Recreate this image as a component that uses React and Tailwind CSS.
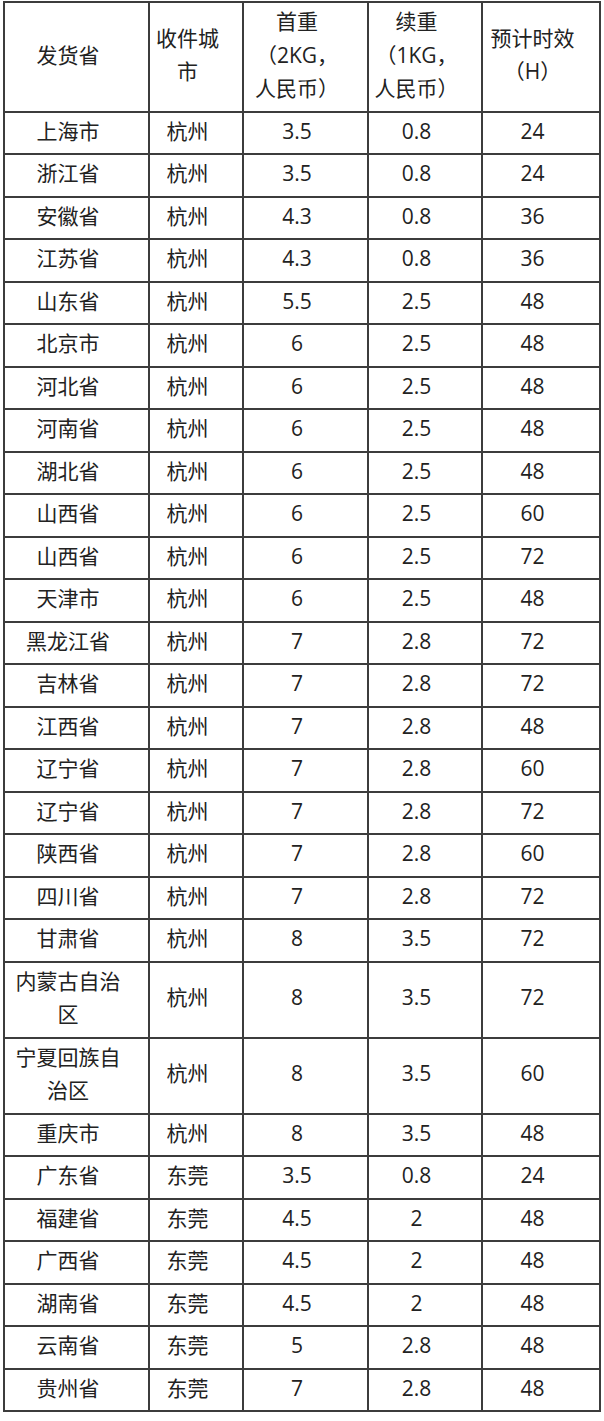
import React from 'react';

const rows = [
  ['上海市', '杭州', '3.5', '0.8', '24'],
  ['浙江省', '杭州', '3.5', '0.8', '24'],
  ['安徽省', '杭州', '4.3', '0.8', '36'],
  ['江苏省', '杭州', '4.3', '0.8', '36'],
  ['山东省', '杭州', '5.5', '2.5', '48'],
  ['北京市', '杭州', '6', '2.5', '48'],
  ['河北省', '杭州', '6', '2.5', '48'],
  ['河南省', '杭州', '6', '2.5', '48'],
  ['湖北省', '杭州', '6', '2.5', '48'],
  ['山西省', '杭州', '6', '2.5', '60'],
  ['山西省', '杭州', '6', '2.5', '72'],
  ['天津市', '杭州', '6', '2.5', '48'],
  ['黑龙江省', '杭州', '7', '2.8', '72'],
  ['吉林省', '杭州', '7', '2.8', '72'],
  ['江西省', '杭州', '7', '2.8', '48'],
  ['辽宁省', '杭州', '7', '2.8', '60'],
  ['辽宁省', '杭州', '7', '2.8', '72'],
  ['陕西省', '杭州', '7', '2.8', '60'],
  ['四川省', '杭州', '7', '2.8', '72'],
  ['甘肃省', '杭州', '8', '3.5', '72'],
  [['内蒙古自治', '区'], '杭州', '8', '3.5', '72'],
  [['宁夏回族自', '治区'], '杭州', '8', '3.5', '60'],
  ['重庆市', '杭州', '8', '3.5', '48'],
  ['广东省', '东莞', '3.5', '0.8', '24'],
  ['福建省', '东莞', '4.5', '2', '48'],
  ['广西省', '东莞', '4.5', '2', '48'],
  ['湖南省', '东莞', '4.5', '2', '48'],
  ['云南省', '东莞', '5', '2.8', '48'],
  ['贵州省', '东莞', '7', '2.8', '48'],
];

const headers = [
  ['发货省'],
  ['收件城', '市'],
  ['首重', '（2KG，', '人民币）'],
  ['续重', '（1KG，', '人民币）'],
  ['预计时效', '（H）'],
];

const cell = 'border-2 border-[#3c3c3c] pl-[4px] pr-[21px] pt-[2px] pb-[5px] text-center align-middle';

const Lines = ({ parts }) =>
  parts.map((p, i) => (
    <React.Fragment key={i}>
      {i > 0 && <br />}
      {p}
    </React.Fragment>
  ));

export default function App() {
  return (
    <div className="bg-white min-h-[1421px] pt-[1px] pl-[3px]">
      <table
        className="table-fixed border-collapse w-[596px] text-[21px] leading-[33.5px] text-[#222]"
        style={{ fontFamily: '"Open Sans", "Noto Sans CJK SC", sans-serif' }}
      >
        <colgroup>
          <col className="w-[145px]" />
          <col className="w-[94px]" />
          <col className="w-[125px]" />
          <col className="w-[114px]" />
          <col className="w-[118px]" />
        </colgroup>
        <thead>
          <tr>
            {headers.map((h, i) => (
              <th key={i} className={`${cell} font-normal`}>
                <Lines parts={h} />
              </th>
            ))}
          </tr>
        </thead>
        <tbody>
          {rows.map((r, i) => (
            <tr key={i}>
              {r.map((c, j) => (
                <td key={j} className={cell}>
                  {Array.isArray(c) ? <Lines parts={c} /> : c}
                </td>
              ))}
            </tr>
          ))}
        </tbody>
      </table>
    </div>
  );
}
